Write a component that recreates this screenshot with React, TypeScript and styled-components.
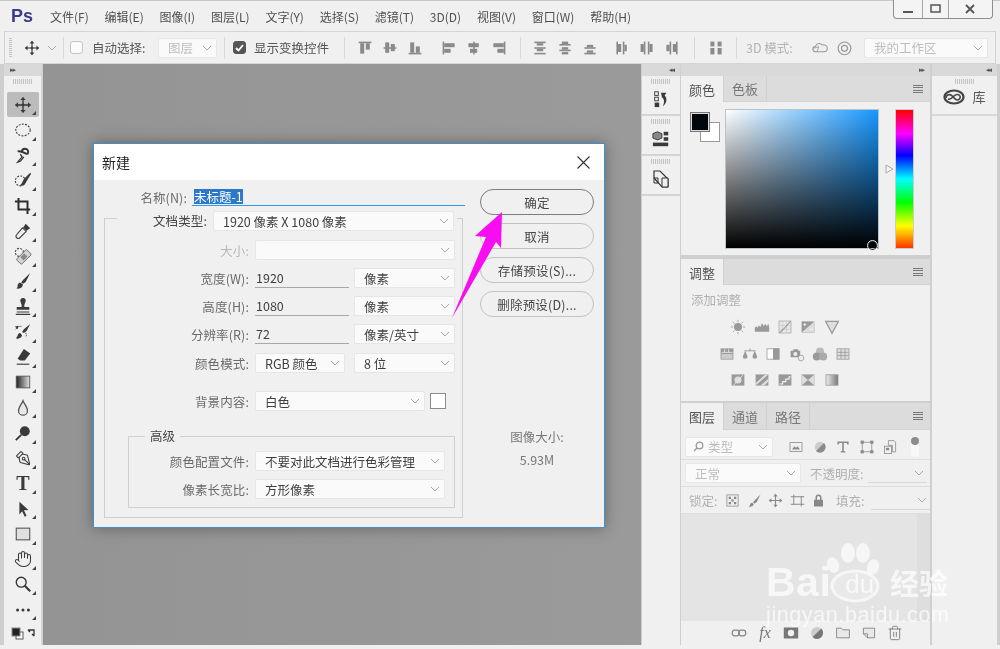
import React from 'react'
import styled, { createGlobalStyle } from 'styled-components'
import { Hand, PenTool, Trash2 } from 'lucide-react'

const Global = createGlobalStyle`
  html, body { margin: 0; padding: 0; background: #f0f0f0; }
  * { box-sizing: border-box; }
  body { font-family: "Noto Sans CJK SC", "Noto Sans", sans-serif; }
`

const Win = styled.div`
  width: 1000px;
  height: 649px;
  overflow: hidden;
  position: relative;
  display: flex;
  flex-direction: column;
  background: #f0f0f0;
  color: #555;
  font-size: 12.5px;
  filter: blur(0.25px);
`

/* menu */
const MenuBar = styled.div`
  height: 31px;
  flex: none;
  display: flex;
  align-items: center;
  border-top: 1px solid #c8c8c8;
`
const Logo = styled.span`
  width: 50px;
  padding-left: 11px;
  font-family: "Liberation Sans", sans-serif;
  font-weight: 700;
  font-size: 18px;
  color: #3b3a8c;
`
const MenuItems = styled.div`
  display: flex;
  gap: 15.8px;
  font-size: 12px;
  color: #505050;
`
const WinButtons = styled.div`
  margin-left: auto;
  margin-right: 7px;
  align-self: flex-start;
  margin-top: -1px;
  width: 100px;
  height: 19px;
  display: grid;
  grid-template-columns: 28px 26px 1fr;
  border: 1px solid #8e8e8e;
  border-top: none;
  border-radius: 0 0 4px 4px;
  background: #f4f4f4;
`
const WinBtn = styled.div`
  display: flex;
  align-items: center;
  justify-content: center;
  & + & { border-left: 1px solid #a5a5a5; }
`

/* options */
const OptionsBar = styled.div`
  height: 33px;
  flex: none;
  margin: 0 4px;
  display: flex;
  align-items: center;
  border: 1px solid #d4d4d4;
`
const Slot = styled.div<{ $ml: number; $w?: number }>`
  flex: none;
  margin-left: ${p => p.$ml}px;
  ${p => (p.$w ? `width: ${p.$w}px;` : '')}
  display: flex;
  align-items: center;
  white-space: nowrap;
`
const Grip = styled.div`
  width: 3px;
  height: 20px;
  background: repeating-linear-gradient(#c4c4c4 0 1px, transparent 1px 2px);
`
const Sep = styled.div<{ $ml: number }>`
  flex: none;
  width: 1px;
  height: 22px;
  background: #d8d8d8;
  margin-left: ${p => p.$ml}px;
`
const Check = styled.div<{ $on?: boolean }>`
  width: 13px;
  height: 13px;
  border-radius: 3px;
  border: 1px solid ${p => (p.$on ? '#555' : '#c2c2c2')};
  background: ${p => (p.$on ? '#555' : '#fbfbfb')};
  display: flex;
  align-items: center;
  justify-content: center;
`
const IconGroup = styled.div<{ $ml: number }>`
  flex: none;
  display: flex;
  gap: 9px;
  margin-left: ${p => p.$ml}px;
`
const Faded = styled.span`
  color: #b4b4b4;
`

const SelectBox = styled.div<{ $w: number; $h?: number; $off?: boolean; $pad?: number }>`
  flex: none;
  width: ${p => p.$w}px;
  height: ${p => p.$h ?? 20}px;
  padding: 0 4px 0 ${p => p.$pad ?? 9}px;
  display: flex;
  align-items: center;
  justify-content: space-between;
  background: #fafafa;
  border: 1px solid #e6e6e6;
  border-radius: 2px;
  color: ${p => (p.$off ? '#bdbdbd' : '#3f3f3f')};
  white-space: nowrap;
`
const SelectLead = styled.span`
  display: flex;
  align-items: center;
  gap: 4px;
`
const Chev = () => (
  <svg width="10" height="6" viewBox="0 0 10 6" fill="none" stroke="#a8a8a8">
    <path d="M1 1l4 4 4-4" />
  </svg>
)
const Select: React.FC<{ w: number; h?: number; off?: boolean; pad?: number; children?: React.ReactNode }> = ({ w, h, off, pad, children }) => (
  <SelectBox $w={w} $h={h} $off={off} $pad={pad}>
    <SelectLead>{children}</SelectLead>
    <Chev />
  </SelectBox>
)

/* main */
const Main = styled.div`
  flex: 1;
  min-height: 0;
  display: flex;
  margin-bottom: 4px;
  background: #cfcfcf;
`
const Collapse = styled.div<{ $align?: string }>`
  height: 12px;
  flex: none;
  background: #d9d9d9;
  color: #555;
  font-size: 7px;
  line-height: 12px;
  letter-spacing: -1px;
  padding: 0 6px;
  font-family: "DejaVu Sans", sans-serif;
  text-align: ${p => p.$align ?? 'left'};
`
const ToolCol = styled.div`
  margin-left: 4px;
  width: 38px;
  flex: none;
  display: flex;
  flex-direction: column;
  background: #f0f0f0;
  border-right: 1px solid #d8d8d8;
`
const DragDots = styled.div`
  height: 5px;
  width: 20px;
  margin: 3px auto 0;
  flex: none;
  background: repeating-linear-gradient(90deg, #c2c2c2 0 1px, transparent 1px 2px);
`
const ToolList = styled.div`
  margin-top: 8px;
  display: flex;
  flex-direction: column;
`
const Tool = styled.div<{ $on?: boolean }>`
  position: relative;
  height: 25.25px;
  width: 32px;
  margin-left: 3px;
  display: flex;
  align-items: center;
  justify-content: center;
  color: #3a3a3a;
  border-radius: 2px;
  background: ${p => (p.$on ? '#bcbcbc' : 'transparent')};
  font-family: "Liberation Serif", serif;
  font-weight: 700;
  font-size: 20px;
  &::after {
    content: '';
    position: absolute;
    right: 3px;
    bottom: 2px;
    border-style: solid;
    border-width: 0 0 4px 4px;
    border-color: transparent transparent #444 transparent;
  }
`
const MiniColors = styled.div`
  margin: 4px 0 0 7px;
`
const Canvas = styled.div`
  width: 598px;
  flex: none;
  position: relative;
  margin-left: 1px;
  background: linear-gradient(90deg, #949494, #9a9a9a);
`
const Dock = styled.div`
  margin-left: 1px;
  width: 38px;
  flex: none;
  display: flex;
  flex-direction: column;
  background: #f0f0f0;
`
const DockCell = styled.div`
  height: 40px;
  flex: none;
  display: flex;
  flex-direction: column;
  align-items: center;
  border-bottom: 2px solid #d4d4d4;
  color: #3c3c3c;
`
const DockIcon = styled.div`
  margin-top: 3px;
  height: 24px;
  display: flex;
  align-items: center;
`
const PanelCol = styled.div`
  margin-left: 1px;
  width: 249px;
  flex: none;
  display: flex;
  flex-direction: column;
`
const Panel = styled.div<{ $h?: number; $mt?: number }>`
  ${p => (p.$h ? `height: ${p.$h}px; flex: none;` : 'flex: 1;')}
  margin-top: ${p => p.$mt ?? 0}px;
  display: flex;
  flex-direction: column;
  background: #f0f0f0;
  min-height: 0;
`
const Tabs = styled.div<{ $h?: number }>`
  height: ${p => p.$h ?? 26}px;
  flex: none;
  display: flex;
  align-items: stretch;
  background: #dcdcdc;
  border-bottom: 1px solid #d2d2d2;
`
const Tab = styled.div<{ $on?: boolean }>`
  width: 43px;
  display: flex;
  align-items: center;
  justify-content: center;
  font-size: 13px;
  color: ${p => (p.$on ? '#555' : '#777')};
  background: ${p => (p.$on ? '#f0f0f0' : 'transparent')};
  border-right: 1px solid #d0d0d0;
  margin-bottom: ${p => (p.$on ? '-1px' : '0')};
`
const MenuLines = styled.div`
  margin: auto 7px auto auto;
  width: 10px;
  height: 8px;
  background: repeating-linear-gradient(#777 0 1px, transparent 1px 2.4px);
`
const ColorBody = styled.div`
  flex: 1;
  display: flex;
  padding: 7px 0 0 9px;
`
const Swatches = styled.div`
  position: relative;
  width: 35px;
  height: 32px;
`
const Swatch = styled.div<{ $fg?: boolean }>`
  position: absolute;
  left: ${p => (p.$fg ? 0 : 10)}px;
  top: ${p => (p.$fg ? 3 : 13)}px;
  width: 20px;
  height: 20px;
  background: ${p => (p.$fg ? '#03060b' : '#fff')};
  border: 1px solid ${p => (p.$fg ? '#777' : '#999')};
  ${p => (p.$fg ? 'box-shadow: inset 0 0 0 1px #ddd;' : '')}
  z-index: ${p => (p.$fg ? 2 : 1)};
`
const Spectrum = styled.div`
  position: relative;
  width: 154px;
  height: 140px;
  border: 1px solid #b8c4cc;
  background: linear-gradient(to top, #000, transparent), linear-gradient(to right, #fff, #1797ff);
`
const PickRing = styled.div`
  position: absolute;
  right: 0;
  bottom: -3px;
  width: 11px;
  height: 11px;
  border: 1.5px solid #e8e8e8;
  border-radius: 50%;
  box-shadow: inset 0 0 0 1px #222;
`
const Hue = styled.div`
  position: relative;
  margin-left: 16px;
  width: 19px;
  height: 140px;
  border: 1px solid #ccc;
  background: linear-gradient(#f00, #f0f 17%, #00f 33%, #0ff 50%, #0f0 67%, #ff0 84%, #f30);
`
const HueMark = styled.svg`
  position: absolute;
  left: -11px;
  top: 54px;
`
const AdjustTitle = styled.div`
  padding: 7px 0 0 10px;
  line-height: 16px;
  font-size: 12.5px;
  color: #b0b0b0;
`
const AdjustRows = styled.div`
  margin-top: 11px;
  width: 208px;
  display: flex;
  flex-direction: column;
  gap: 10.5px;
`
const AdjustRow = styled.div`
  height: 16px;
  display: flex;
  justify-content: center;
  gap: 7.4px;
`
const LayerRow = styled.div<{ $h: number; $pt?: number }>`
  height: ${p => p.$h}px;
  flex: none;
  display: flex;
  align-items: center;
  padding: ${p => p.$pt ?? 0}px 0 0 4px;
  border-bottom: 1px solid #dedede;
  color: #b0b0b0;
`
const FieldLine = styled.div`
  width: 59px;
  height: 19px;
  margin-left: 3px;
  display: flex;
  align-items: center;
  justify-content: flex-end;
  border-bottom: 1px solid #d8d8d8;
  padding-right: 3px;
`
const LayerList = styled.div`
  flex: 1;
  background: linear-gradient(90deg, #e4e4e4 236px, #dedede 236px);
`
const LayerFooter = styled.div`
  height: 24px;
  flex: none;
  display: flex;
  align-items: center;
  padding-left: 50px;
  gap: 10px;
  color: #777;
`
const LibCol = styled.div`
  margin-left: 2px;
  flex: 1;
  margin-right: 3px;
  display: flex;
  flex-direction: column;
  background: #f0f0f0;
`
const LibCell = styled.div`
  height: 40px;
  flex: none;
  border-bottom: 2px solid #d8d8d8;
  display: flex;
  flex-direction: column;
  align-items: center;
`
const LibRow = styled.div`
  display: flex;
  align-items: center;
  gap: 7px;
  margin-top: 3px;
  font-size: 13px;
  color: #555;
`

/* dialog */
const Dialog = styled.div`
  position: absolute;
  left: 50px;
  top: 79px;
  width: 512px;
  height: 385px;
  display: flex;
  flex-direction: column;
  background: #f0f0f0;
  border: 1px solid #3f90cc;
  box-shadow: 0 0 14px rgba(0, 0, 0, 0.35);
`
const DialogHead = styled.div`
  height: 36px;
  flex: none;
  background: #fff;
  display: flex;
  align-items: center;
  justify-content: space-between;
  padding: 0 14px 0 8px;
  font-size: 14px;
  color: #222;
`
const DialogBody = styled.div`
  flex: 1;
  display: flex;
  padding: 9px 0 0 10px;
`
const FormCol = styled.div`
  width: 359px;
  flex: none;
`
const NameRow = styled.div`
  display: flex;
  height: 16px;
  align-items: center;
`
const Label = styled.div<{ $w: number; $off?: boolean; $dark?: boolean }>`
  width: ${p => p.$w}px;
  flex: none;
  text-align: right;
  white-space: nowrap;
  letter-spacing: 0.1px;
  color: ${p => (p.$off ? '#b8b8b8' : p.$dark ? '#444' : '#6a6a6a')};
`
const NameInput = styled.div`
  margin-left: 5px;
  flex: 1;
  height: 17px;
  margin-right: -2px;
  display: flex;
  align-items: center;
  padding-left: 2px;
  border-bottom: 1px solid #2f9bf0;
`
const Selected = styled.span`
  background: #2b78c8;
  color: #fff;
  line-height: 15px;
`
const OuterBox = styled.fieldset`
  margin: 6px 0 0;
  padding: 0 0 9px;
  min-inline-size: 0;
  border: 1px solid #cfcfcf;
  border-radius: 0;
`
const OuterLegend = styled.legend`
  margin-left: 12px;
  padding: 0;
  width: 340px;
  height: 14px;
  display: flex;
  align-items: flex-start;
  gap: 6px;
`
const Rows = styled.div<{ $mt: number }>`
  margin-top: ${p => p.$mt}px;
  display: flex;
  flex-direction: column;
  gap: 8px;
`
const Row = styled.div<{ $mt?: number }>`
  display: flex;
  align-items: center;
  height: 20px;
  margin-top: ${p => p.$mt ?? 0}px;
`
const Field = styled.div<{ $gap?: number }>`
  margin-left: 6px;
  display: flex;
  align-items: center;
  gap: ${p => p.$gap ?? 5}px;
`
const UnderInput = styled.div`
  width: 94px;
  height: 19px;
  padding-left: 1px;
  line-height: 18px;
  color: #3f3f3f;
  border-bottom: 1px solid #a8a8a8;
`
const ColorChip = styled.div`
  width: 16px;
  height: 16px;
  background: #fff;
  border: 1px solid #8c8c8c;
`
const GroupBox = styled.fieldset`
  margin: 17px 0 0 23px;
  padding: 7px 0 8px;
  width: 327px;
  min-inline-size: 0;
  border: 1px solid #cfcfcf;
`
const GroupLegend = styled.legend`
  margin-left: 16px;
  padding: 0 5px;
  height: 16px;
  line-height: 16px;
  color: #444;
`
const ButtonCol = styled.div`
  margin-left: 17px;
  width: 114px;
  display: flex;
  flex-direction: column;
  gap: 8px;
`
const Button = styled.div<{ $primary?: boolean }>`
  height: 26px;
  border-radius: 13px;
  border: 1.5px solid ${p => (p.$primary ? '#7d7d7d' : '#c2c2c2')};
  display: flex;
  align-items: center;
  justify-content: center;
  letter-spacing: 0.2px;
  color: #444;
`
const SizeInfo = styled.div`
  margin-top: 104px;
  text-align: center;
  color: #777;
  line-height: 16px;
  display: flex;
  flex-direction: column;
  gap: 7px;
`

/* overlays */
const Arrow = styled.svg`
  position: absolute;
  left: 0;
  top: 0;
  pointer-events: none;
`
const Watermark = styled.div`
  position: absolute;
  left: 766px;
  top: 541px;
  width: 182px;
  color: rgba(255, 255, 255, 0.7);
  font-family: "Liberation Sans", sans-serif;
  pointer-events: none;
`
const PawSvg = styled.svg`
  position: absolute;
  left: 45px;
  top: 0;
`
const MarkTop = styled.div`
  position: relative;
  display: flex;
  align-items: flex-end;
  height: 60px;
  white-space: nowrap;
`
const MarkWord = styled.span`
  font-size: 41px;
  font-weight: 700;
  line-height: 38px;
  letter-spacing: 0.5px;
`
const MarkDu = styled.span`
  font-size: 26px;
  line-height: 34px;
  margin-left: 14px;
  width: 36px;
`
const MarkCn = styled.span`
  font-family: "Noto Sans CJK SC", sans-serif;
  font-size: 29px;
  font-weight: 700;
  line-height: 38px;
  margin-left: 12px;
`
const MarkUrl = styled.div`
  font-size: 21.5px;
  line-height: 20px;
  margin-top: 4px;
  letter-spacing: 0.6px;
  white-space: nowrap;
`

/* icons */
const Svg: React.FC<{ s?: number; c?: string; children: React.ReactNode }> = ({ s = 18, c = '#3a3a3a', children }) => (
  <svg width={s} height={s} viewBox="0 0 20 20" fill={c} stroke="none">{children}</svg>
)
const dash = { fill: 'none', stroke: '#444', strokeWidth: 1.2, strokeDasharray: '2.2 1.4' }

const MoveIcon: React.FC<{ s?: number }> = ({ s }) => (
  <Svg s={s}>
    <path d="M10 2v16M2 10h16" stroke="#333" strokeWidth="1.4" />
    <path d="M10 1l3 3.5H7zM10 19l3-3.5H7zM1 10l3.5-3v6zM19 10l-3.5-3v6z" />
    <circle cx="10" cy="10" r="1.6" />
  </Svg>
)
const tools: React.ReactNode[] = [
  <MoveIcon />,
  <Svg><ellipse cx="10" cy="10" rx="8" ry="6.5" {...dash} /></Svg>,
  <Svg><path d="M4 6c4-1 8 2 11 3M15 9c2-3 0-6-3-6-2 0-3 1-3 3" fill="none" stroke="#333" strokeWidth="2.2" /><path d="M7 9l2 3-5 6 3-1 4-5" fill="none" stroke="#333" strokeWidth="1.4" /></Svg>,
  <Svg><circle cx="7" cy="11" r="5.5" {...dash} /><path d="M18 2l-7 7-2 4c-1 2-3 3-3 3 3 1 6 0 7-3l6-10z" /></Svg>,
  <Svg><path d="M5 1v13h13M1 5h14v14" fill="none" stroke="#2e2e2e" strokeWidth="2.2" /></Svg>,
  <Svg><path d="M13 2l5 5-3 2-1 1-4-4 1-1z" /><path d="M9.5 6.5l4 4-7 7c-1 1-2.5 1-3.5 0s-1-2.5 0-3.5z" fill="#f0f0f0" stroke="#444" strokeWidth="1.2" /></Svg>,
  <Svg><circle cx="6" cy="6" r="4.5" {...dash} /><g transform="rotate(-45 11 11)"><rect x="3" y="7" width="16" height="8" rx="1.5" fill="#d4d4d4" stroke="#666" /><rect x="8" y="8.5" width="6" height="5" fill="#888" /></g></Svg>,
  <Svg><path d="M18 1L10 9l-2 3 2 1 3-2zM7 12c-3 0-3 3-3 4 0 1-1 2-2 2 3 1 7 1 8-4z" /></Svg>,
  <Svg><path d="M7 3a3 3 0 016 0c0 2-1.5 3-1.5 5v2H17v3H3v-3h5.5V8C8.5 6 7 5 7 3zM3 15h14v1H3zM2 17.5h16V19H2z" /></Svg>,
  <Svg><path d="M18 1l-7 6-2 3 2 1 3-2zM7 11c-2 0-3 2-3 3 0 1-1 2-2 3 3 1 6 0 7-3z" /><path d="M2 7c2-3 5-4 7-3M13 11c1 2 1 3 0 4" fill="none" stroke="#333" strokeDasharray="1.5 1" /><path d="M1 4l4-1-1 4z" /></Svg>,
  <Svg><path d="M11 1l7 5-6 8H7l-3-2z" /><path d="M3 18h14" stroke="#333" strokeWidth="1.2" /></Svg>,
  <Svg><defs><linearGradient id="gt"><stop offset="0" stopColor="#222" /><stop offset="1" stopColor="#e4e4e4" /></linearGradient></defs><rect x="2.5" y="3.5" width="15" height="13" fill="url(#gt)" stroke="#555" /></Svg>,
  <Svg><path d="M10 2c1 3 5 7 5 11a5 5 0 01-10 0c0-4 4-8 5-11z" fill="#e8e8e8" stroke="#555" strokeWidth="1.4" /></Svg>,
  <Svg><circle cx="12" cy="8" r="5.5" /><path d="M8 12l-6 6" stroke="#333" strokeWidth="2" /></Svg>,
  <PenTool size={16} strokeWidth={1.6} style={{ transform: 'rotate(180deg)' }} />,
  'T',
  <Svg><path d="M6 2l10 9-5 .5 3 6-2 1-3-6L6 16z" /></Svg>,
  <Svg><rect x="2.5" y="3.5" width="15" height="13" fill="#e0e0e0" stroke="#555" strokeWidth="1.2" /></Svg>,
  <Hand size={18} strokeWidth={1.4} />,
  <Svg><circle cx="8" cy="8" r="5.5" fill="none" stroke="#333" strokeWidth="1.5" /><path d="M12 12l6 6" stroke="#333" strokeWidth="2.2" /></Svg>,
  <Svg><circle cx="4" cy="10" r="1.7" /><circle cx="10" cy="10" r="1.7" /><circle cx="16" cy="10" r="1.7" /></Svg>,
]

const gray = '#8a8a8a'
const R: React.FC<{ d: number[][] }> = ({ d }) => (
  <Svg s={16} c={gray}>{d.map((r, i) => <rect key={i} x={r[0]} y={r[1]} width={r[2]} height={r[3]} />)}</Svg>
)
const alignA = [
  [[2, 2, 16, 2], [4, 4, 5, 13], [11, 4, 5, 8]],
  [[2, 9, 16, 2], [4, 3, 5, 13], [11, 5, 5, 9]],
  [[2, 16, 16, 2], [4, 3, 5, 13], [11, 8, 5, 8]],
]
const alignB = [
  [[2, 2, 2, 16], [4, 4, 13, 5], [4, 11, 8, 5]],
  [[9, 2, 2, 16], [3, 4, 13, 5], [5, 11, 9, 5]],
  [[16, 2, 2, 16], [3, 4, 13, 5], [8, 11, 8, 5]],
]
const distA = [
  [[3, 2, 14, 2], [6, 4, 8, 3], [3, 9, 14, 2], [6, 11, 8, 3], [3, 16, 14, 2]],
  [[6, 2, 8, 3], [3, 5, 14, 2], [6, 9, 8, 3], [3, 12, 14, 2], [6, 15, 8, 3]],
  [[6, 6, 8, 3], [3, 9, 14, 2], [6, 13, 8, 3], [3, 16, 14, 2]],
]
const distB = [
  [[3, 2, 2, 16], [5, 5, 4, 10], [11, 2, 2, 16], [13, 6, 3, 8]],
  [[2, 5, 4, 10], [6, 2, 2, 16], [11, 2, 2, 16], [13, 5, 4, 10]],
  [[3, 6, 4, 8], [7, 2, 2, 16], [11, 5, 4, 10], [15, 2, 2, 16]],
]

const ga = '#999'
const adjustRows: React.ReactNode[][] = [
  [
    <Svg s={16} c={ga}><circle cx="10" cy="10" r="5" /><path d="M10 1v3M10 16v3M1 10h3M16 10h3M3.6 3.6l2 2M14.4 14.4l2 2M3.6 16.4l2-2M14.4 5.6l2-2" stroke={ga} /></Svg>,
    <Svg s={16} c={ga}><path d="M1 16V11l2-2 1 2 2-3 2 2 2-5 2 4 2-3 2 3 2-3 1 5v5z" /></Svg>,
    <Svg s={16} c={ga}><rect x="2.5" y="2.5" width="15" height="15" fill="#e8e8e8" stroke="#aaa" /><path d="M7 3v14M12 3v14M3 8h14M3 13h14" stroke="#ccc" /><path d="M3 17C8 14 12 8 17 3" fill="none" stroke={ga} strokeWidth="1.3" /></Svg>,
    <Svg s={16} c={ga}><rect x="2" y="3" width="16" height="14" /><path d="M2 17L18 3v14z" fill="#ddd" /><path d="M4 7h4M6 5v4M12 13h4" stroke="#fff" /></Svg>,
    <Svg s={16} c={ga}><path d="M2 3h16l-8 15z" fill="#ddd" stroke={ga} strokeWidth="1.5" /></Svg>,
  ],
  [
    <Svg s={16} c={ga}><rect x="2" y="3" width="16" height="14" /><path d="M3 8h14M7 4v4M12 4v4" stroke="#eee" /><rect x="3" y="10" width="14" height="6" fill="#ccc" /></Svg>,
    <Svg s={16} c={ga}><path d="M10 3v3M3 6h14" stroke={ga} strokeWidth="1.2" /><path d="M1 13l3-7 3 7a3 3 0 01-6 0zM13 13l3-7 3 7a3 3 0 01-6 0z" /></Svg>,
    <Svg s={16} c={ga}><rect x="2.5" y="3.5" width="15" height="13" fill="#fff" stroke={ga} /><rect x="10" y="3" width="8" height="14" /></Svg>,
    <Svg s={16} c={ga}><path d="M2 6h3l1-2h5l1 2h2v8H2z" /><circle cx="8" cy="10" r="2.5" fill="#eee" /><circle cx="15" cy="15" r="3.5" fill="#eee" stroke={ga} /></Svg>,
    <Svg s={16} c={ga}><circle cx="10" cy="7" r="5" fill="#bbb" /><circle cx="6" cy="13" r="5" /><circle cx="14" cy="13" r="5" fill="#aaa" /></Svg>,
    <Svg s={16} c={ga}><rect x="2.5" y="3.5" width="15" height="13" fill="#ddd" stroke={ga} /><path d="M7.5 4v12M12.5 4v12M3 8h14M3 12h14" stroke={ga} /></Svg>,
  ],
  [
    <Svg s={16} c={ga}><rect x="2" y="3" width="16" height="14" /><circle cx="10" cy="10" r="4.5" fill="#ddd" /><path d="M4 17L16 4" stroke="#eee" /></Svg>,
    <Svg s={16} c={ga}><rect x="2" y="3" width="16" height="14" /><path d="M2 14L14 3h4L2 17zM8 17L18 8v4l-5 5z" fill="#ddd" /></Svg>,
    <Svg s={16} c={ga}><rect x="2" y="3" width="16" height="14" /><path d="M3 15h4v-3h4V9h4V6h2" fill="none" stroke="#eee" strokeWidth="1.5" /></Svg>,
    <Svg s={16} c={ga}><rect x="2" y="3" width="16" height="14" /><path d="M2 3l8 7-8 7zM18 3l-8 7 8 7z" fill="#ddd" /></Svg>,
    <Svg s={16} c={ga}><defs><linearGradient id="ga"><stop offset="0" stopColor="#eee" /><stop offset="1" stopColor="#777" /></linearGradient></defs><rect x="2.5" y="3.5" width="15" height="13" fill="url(#ga)" stroke={ga} /></Svg>,
  ],
]

const FilterIcons = styled.div`
  margin-left: 15px;
  display: flex;
  gap: 7.5px;
`
const Toggle = styled.div`
  margin-left: 13px;
  width: 8px;
  height: 20px;
  background: #f8f8f8;
  border-radius: 4px;
  position: relative;
  &::before {
    content: '';
    position: absolute;
    left: 0;
    top: 0;
    width: 8px;
    height: 8px;
    border-radius: 50%;
    background: #8c8c8c;
  }
`
const filterIcons = [
  <Svg s={16} c="#8a8a8a"><rect x="2.5" y="4.5" width="15" height="11" fill="none" stroke="#8a8a8a" /><path d="M5 13l3-4 2 2 2-2 3 4z" /></Svg>,
  <Svg s={16} c="#8a8a8a"><circle cx="10" cy="10" r="6.5" fill="#ccc" /><path d="M15 5A6.5 6.5 0 115 15z" /></Svg>,
  <Svg s={16} c="#8a8a8a"><path d="M3 3h14v4h-1.5l-1-2H11v10l2 .5V17H7v-1.5L9 15V5H5.5l-1 2H3z" /></Svg>,
  <Svg s={16} c="#8a8a8a"><rect x="4" y="4" width="12" height="12" fill="none" stroke="#8a8a8a" /><rect x="2" y="2" width="4" height="4" /><rect x="14" y="2" width="4" height="4" /><rect x="2" y="14" width="4" height="4" /><rect x="14" y="14" width="4" height="4" /></Svg>,
  <Svg s={16} c="#8a8a8a"><path d="M8 2h7l2 2v12h-4V8H8z" fill="none" stroke="#8a8a8a" /><rect x="3" y="9" width="9" height="9" fill="none" stroke="#8a8a8a" /><rect x="5" y="11" width="4" height="3" /></Svg>,
]
const lockIcons = [
  <Svg s={15} c="#888"><rect x="2.5" y="2.5" width="15" height="15" fill="#eee" stroke="#888" /><rect x="5" y="5" width="3" height="3" /><rect x="12" y="5" width="3" height="3" /><rect x="8.5" y="8.5" width="3" height="3" /><rect x="5" y="12" width="3" height="3" /><rect x="12" y="12" width="3" height="3" /></Svg>,
  <Svg s={15} c="#888"><path d="M18 2L10 10l-2 3 2 1 3-2zM7 13c-2 0-3 2-3 3 0 1-1 2-2 2 3 1 6 0 7-3z" /></Svg>,
  <Svg s={15} c="#888"><path d="M10 2v16M2 10h16" stroke="#888" strokeWidth="1.5" /><path d="M10 1l3 3.5H7zM10 19l3-3.5H7zM1 10l3.5-3v6zM19 10l-3.5-3v6z" /></Svg>,
  <Svg s={15} c="#888"><path d="M5 2v14M15 4v14M1 5h18M1 15h18" stroke="#888" strokeWidth="1.3" /></Svg>,
  <Svg s={15} c="#888"><path d="M6 9V6a4 4 0 018 0v3h2v9H4V9zm2 0h4V6a2 2 0 00-4 0z" fillRule="evenodd" /></Svg>,
]
const LockIcons = styled.div`
  margin-left: 4px;
  display: flex;
  gap: 6.5px;
`
const FxText = styled.span`
  width: 16px;
  font-family: "Liberation Serif", serif;
  font-style: italic;
  font-size: 16px;
  color: #777;
  text-align: center;
`
const footerIcons = [
  <Svg s={16} c="none"><rect x="1.5" y="6.5" width="9" height="7" rx="3.5" fill="none" stroke="#888" strokeWidth="1.5" /><rect x="9.5" y="6.5" width="9" height="7" rx="3.5" fill="none" stroke="#888" strokeWidth="1.5" /></Svg>,
  <FxText>fx</FxText>,
  <Svg s={16} c="#777"><path d="M1 3h18v14H1zm9 3a4 4 0 100 8 4 4 0 000-8z" fillRule="evenodd" /></Svg>,
  <Svg s={16} c="#777"><circle cx="10" cy="10" r="7.5" fill="#ccc" /><path d="M15.5 4.5a7.5 7.5 0 01-11 10.5z" /></Svg>,
  <Svg s={16} c="#777"><path d="M2 4h6l2 2h8v10H2z" fill="#e8e8e8" stroke="#777" /></Svg>,
  <Svg s={16} c="#777"><path d="M3 4h14v12H8l-5-5z" fill="#e8e8e8" stroke="#777" /><path d="M8 16v-5H3" fill="none" stroke="#777" /></Svg>,
  <Trash2 size={16} strokeWidth={1.3} />,
]

const App: React.FC = () => (
  <Win>
    <Global />
    <MenuBar>
      <Logo>Ps</Logo>
      <MenuItems>
        {['文件(F)', '编辑(E)', '图像(I)', '图层(L)', '文字(Y)', '选择(S)', '滤镜(T)', '3D(D)', '视图(V)', '窗口(W)', '帮助(H)'].map(m => (
          <span key={m}>{m}</span>
        ))}
      </MenuItems>
      <WinButtons>
        <WinBtn><svg width="11" height="10"><rect x="0" y="7" width="10" height="2" fill="#555" /></svg></WinBtn>
        <WinBtn><svg width="11" height="10"><rect x="1" y="1" width="9" height="7" fill="none" stroke="#555" strokeWidth="1.5" /></svg></WinBtn>
        <WinBtn><svg width="11" height="10"><path d="M1 1l8 8M9 1l-8 8" stroke="#555" strokeWidth="1.8" /></svg></WinBtn>
      </WinButtons>
    </MenuBar>

    <OptionsBar>
      <Slot $ml={4}><Grip /></Slot>
      <Slot $ml={12}><MoveIcon s={16} /></Slot>
      <Slot $ml={7}><Chev /></Slot>
      <Sep $ml={6} />
      <Slot $ml={6}><Check /></Slot>
      <Slot $ml={9} $w={56}>自动选择:</Slot>
      <Slot $ml={10}><Select w={59} off pad={9}>图层</Select></Slot>
      <Sep $ml={7} />
      <Slot $ml={8}><Check $on><svg width="9" height="8" fill="none" stroke="#fff" strokeWidth="1.8"><path d="M1 4l2.5 2.5L8 1" /></svg></Check></Slot>
      <Slot $ml={8} $w={76}>显示变换控件</Slot>
      <Sep $ml={14} />
      <IconGroup $ml={12}>{alignA.map((d, i) => <R key={i} d={d} />)}</IconGroup>
      <IconGroup $ml={18}>{alignB.map((d, i) => <R key={i} d={d} />)}</IconGroup>
      <Sep $ml={13} />
      <IconGroup $ml={11}>{distA.map((d, i) => <R key={i} d={d} />)}</IconGroup>
      <IconGroup $ml={16}>{distB.map((d, i) => <R key={i} d={d} />)}</IconGroup>
      <Sep $ml={14} />
      <IconGroup $ml={13}><R d={[[3, 2, 5, 6], [12, 2, 5, 6], [3, 10, 5, 8], [12, 10, 5, 8]]} /></IconGroup>
      <Sep $ml={12} />
      <Slot $ml={9} $w={50}><Faded>3D 模式:</Faded></Slot>
      <Slot $ml={16}>
        <Svg s={17} c="#aaa"><path d="M4 15a3 3 0 010-6c1-4 6-5 8-2 3-1 6 1 6 4s-2 4-4 4z" fill="none" stroke="#999" strokeWidth="1.3" /><path d="M2 11l6-2-2 6" fill="none" stroke="#999" /></Svg>
      </Slot>
      <Slot $ml={7}>
        <Svg s={17} c="#aaa"><circle cx="10" cy="11" r="7.5" fill="none" stroke="#999" strokeWidth="1.4" /><circle cx="10" cy="11" r="3.5" fill="none" stroke="#999" strokeWidth="1.4" /></Svg>
      </Slot>
      <Slot $ml={11}><Select w={124} off pad={9}>我的工作区</Select></Slot>
    </OptionsBar>

    <Main>
      <ToolCol>
        <Collapse>▸▸</Collapse>
        <DragDots />
        <ToolList>
          {tools.map((t, i) => <Tool key={i} $on={i === 0}>{t}</Tool>)}
        </ToolList>
        <MiniColors>
          <svg width="26" height="14">
            <rect x="5" y="5" width="7" height="7" fill="#fff" stroke="#555" />
            <rect x="1" y="1" width="8" height="8" fill="#222" stroke="#888" />
            <path d="M17 3h6v6M23 9l-2-2M17 3l2 2" fill="none" stroke="#333" strokeWidth="1.3" />
          </svg>
        </MiniColors>
      </ToolCol>

      <Canvas>
        <Dialog>
          <DialogHead>
            新建
            <svg width="13" height="13" stroke="#333" strokeWidth="1.1"><path d="M.5.5l12 12M12.5.5l-12 12" /></svg>
          </DialogHead>
          <DialogBody>
            <FormCol>
              <NameRow>
                <Label $w={83}>名称(N):</Label>
                <NameInput><Selected>未标题-1</Selected></NameInput>
              </NameRow>
              <OuterBox>
                <OuterLegend>
                  <Label $w={90} $dark>文档类型:</Label>
                  <Select w={241}>1920 像素 X 1080 像素</Select>
                </OuterLegend>
                <Rows $mt={15}>
                  <Row>
                    <Label $w={144} $off>大小:</Label>
                    <Field><Select w={200} off /></Field>
                  </Row>
                  <Row>
                    <Label $w={144}>宽度(W):</Label>
                    <Field><UnderInput>1920</UnderInput><Select w={101}>像素</Select></Field>
                  </Row>
                  <Row>
                    <Label $w={144}>高度(H):</Label>
                    <Field><UnderInput>1080</UnderInput><Select w={101}>像素</Select></Field>
                  </Row>
                  <Row>
                    <Label $w={144}>分辨率(R):</Label>
                    <Field><UnderInput>72</UnderInput><Select w={101}>像素/英寸</Select></Field>
                  </Row>
                </Rows>
                <Row $mt={9}>
                  <Label $w={144}>颜色模式:</Label>
                  <Field $gap={9}>
                    <Select w={90}>RGB 颜色</Select>
                    <Select w={101} pad={9}>8 位</Select>
                  </Field>
                </Row>
                <Row $mt={18}>
                  <Label $w={144}>背景内容:</Label>
                  <Field><Select w={170}>白色</Select><ColorChip /></Field>
                </Row>
                <GroupBox>
                  <GroupLegend>高级</GroupLegend>
                  <Row>
                    <Label $w={120}>颜色配置文件:</Label>
                    <Field><Select w={190}>不要对此文档进行色彩管理</Select></Field>
                  </Row>
                  <Row $mt={8}>
                    <Label $w={120}>像素长宽比:</Label>
                    <Field><Select w={190}>方形像素</Select></Field>
                  </Row>
                </GroupBox>
              </OuterBox>
            </FormCol>
            <ButtonCol>
              <Button $primary>确定</Button>
              <Button>取消</Button>
              <Button>存储预设(S)...</Button>
              <Button>删除预设(D)...</Button>
              <SizeInfo>
                <span>图像大小:</span>
                <span>5.93M</span>
              </SizeInfo>
            </ButtonCol>
          </DialogBody>
        </Dialog>
      </Canvas>

      <Dock>
        <Collapse $align="right">◂◂</Collapse>
        <DockCell>
          <DragDots />
          <DockIcon>
            <Svg s={18}><rect x="3" y="2" width="4" height="4" fill="none" stroke="#333" /><rect x="3" y="8" width="4" height="4" fill="none" stroke="#333" /><rect x="3" y="14" width="5" height="5" /><path d="M10 3h6l-2 3c3 3 3 8-2 12 2-4 2-8-1-10z" /></Svg>
          </DockIcon>
        </DockCell>
        <DockCell>
          <DragDots />
          <DockIcon>
            <Svg s={18}><path d="M6 2l5 2v5l-5 2-5-2V4z" fill="#888" stroke="#333" /><rect x="13" y="2" width="5" height="4" /><rect x="13" y="8" width="5" height="4" /><rect x="1" y="14" width="17" height="4" /></Svg>
          </DockIcon>
        </DockCell>
        <DockCell>
          <DragDots />
          <DockIcon>
            <Svg s={20}><path d="M3 2h6l8 8v8h-6L3 9z" fill="none" stroke="#333" strokeWidth="1.2" /><path d="M11 9h6v9h-6z" fill="#f0f0f0" stroke="#333" /><path d="M3 9h4v5H3z" fill="none" stroke="#333" /></Svg>
          </DockIcon>
        </DockCell>
      </Dock>

      <PanelCol>
        <Collapse $align="right">▸▸</Collapse>
        <Panel $h={179}>
          <Tabs>
            <Tab $on>颜色</Tab>
            <Tab>色板</Tab>
            <MenuLines />
          </Tabs>
          <ColorBody>
            <Swatches><Swatch $fg /><Swatch /></Swatches>
            <Spectrum><PickRing /></Spectrum>
            <Hue>
              <HueMark width="9" height="10" fill="#f4f4f4" stroke="#aaa"><path d="M1 1l7 4-7 4z" /></HueMark>
            </Hue>
          </ColorBody>
        </Panel>
        <Panel $h={142} $mt={4}>
          <Tabs>
            <Tab $on>调整</Tab>
            <MenuLines />
          </Tabs>
          <AdjustTitle>添加调整</AdjustTitle>
          <AdjustRows>
            {adjustRows.map((r, i) => (
              <AdjustRow key={i}>{r.map((ic, j) => <React.Fragment key={j}>{ic}</React.Fragment>)}</AdjustRow>
            ))}
          </AdjustRows>
        </Panel>
        <Panel $mt={2}>
          <Tabs $h={27}>
            <Tab $on>图层</Tab>
            <Tab>通道</Tab>
            <Tab>路径</Tab>
            <MenuLines />
          </Tabs>
          <LayerRow $h={30} $pt={4}>
            <Select w={88} off pad={7}>
              <svg width="11" height="11" viewBox="0 0 11 11" fill="none" stroke="#999" strokeWidth="1.3">
                <circle cx="6.5" cy="4.5" r="3.3" />
                <path d="M4 7l-3 3" />
              </svg>
              类型
            </Select>
            <FilterIcons>{filterIcons.map((ic, i) => <React.Fragment key={i}>{ic}</React.Fragment>)}</FilterIcons>
            <Toggle />
          </LayerRow>
          <LayerRow $h={27}>
            <Select w={116} off>正常</Select>
            <Slot $ml={9} $w={55}>不透明度:</Slot>
            <FieldLine><Chev /></FieldLine>
          </LayerRow>
          <LayerRow $h={27}>
            <Slot $ml={4} $w={32}>锁定:</Slot>
            <LockIcons>{lockIcons.map((ic, i) => <React.Fragment key={i}>{ic}</React.Fragment>)}</LockIcons>
            <Slot $ml={10} $w={32}>填充:</Slot>
            <FieldLine><Chev /></FieldLine>
          </LayerRow>
          <LayerList />
          <LayerFooter>{footerIcons.map((ic, i) => <React.Fragment key={i}>{ic}</React.Fragment>)}</LayerFooter>
        </Panel>
      </PanelCol>

      <LibCol>
        <Collapse $align="right">◂◂</Collapse>
        <LibCell>
          <DragDots />
          <LibRow>
            <svg width="22" height="16" viewBox="0 0 22 16" fill="none" stroke="#444" strokeWidth="2.2">
              <ellipse cx="11" cy="8" rx="9.5" ry="6.5" />
              <path d="M3 9c0-3 3-4 5-3s4 5 6 5 4-2 3-4-4-2-6 0-4 4-6 3" strokeWidth="1.6" />
            </svg>
            库
          </LibRow>
        </LibCell>
      </LibCol>
    </Main>

    <Arrow width="1000" height="649">
      <polygon points="502,212 475,236 486,237 452,318 496,242 501,248" fill="#f80df0" />
    </Arrow>

    <Watermark>
      <PawSvg width="80" height="64" viewBox="0 0 80 64" fill="rgba(255,255,255,0.65)">
        <ellipse cx="37" cy="12" rx="7" ry="10" />
        <ellipse cx="52" cy="12" rx="7" ry="10" />
        <ellipse cx="22" cy="24" rx="6" ry="8" transform="rotate(-20 22 24)" />
        <ellipse cx="62" cy="26" rx="6" ry="8" transform="rotate(20 62 26)" />
        <ellipse cx="44" cy="45" rx="23" ry="15" fill="rgba(255,255,255,0.2)" stroke="rgba(255,255,255,0.65)" strokeWidth="3" />
      </PawSvg>
      <MarkTop>
        <MarkWord>Bai</MarkWord>
        <MarkDu>du</MarkDu>
        <MarkCn>经验</MarkCn>
      </MarkTop>
      <MarkUrl>jingyan.baidu.com</MarkUrl>
    </Watermark>
  </Win>
)

export default App
